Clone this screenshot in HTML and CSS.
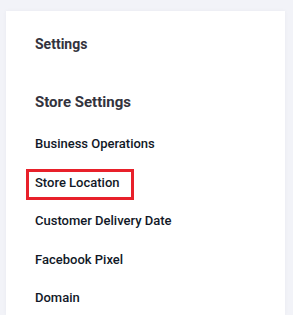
FILE: index.html
```html
<!DOCTYPE html>
<html lang="en">
<head>
    <meta charset="UTF-8">
    <meta name="viewport" content="width=device-width, initial-scale=1.0">
    <title>Settings</title>
    <link rel="stylesheet" href="styles.css">
</head>
<body>
    <aside class="panel">
        <h2 class="panel-title">Settings</h2>
        <h3 class="group-title">Store Settings</h3>
        <nav class="menu">
            <a class="menu-item" href="#">Business Operations</a>
            <a class="menu-item" href="#"><span class="highlight">Store Location</span></a>
            <a class="menu-item" href="#">Customer Delivery Date</a>
            <a class="menu-item" href="#">Facebook Pixel</a>
            <a class="menu-item" href="#">Domain</a>
        </nav>
    </aside>
</body>
</html>
```

FILE: styles.css
```css
body {
    font-family: Roboto, 'Noto Sans', sans-serif;
    margin: 0;
    padding: 11px 8px 0 6px;
    background-color: #f2f3f8;
    color: #1b1f2e;
    overflow: hidden;
}

.panel {
    background-color: #fff;
    height: 304px;
    padding: 0 0 0 29px;
    box-shadow: 0 0 4px rgba(30, 40, 80, 0.04);
}

.panel-title {
    margin: 0;
    padding-top: 23px;
    font-size: 14px;
    font-weight: 700;
    line-height: 20px;
    color: #33333d;
}

.group-title {
    margin: 0;
    padding-top: 38px;
    font-size: 15px;
    font-weight: 700;
    line-height: 20px;
    color: #33333d;
}

.menu {
    display: flex;
    flex-direction: column;
    margin-top: 24px;
}

.menu-item {
    display: flex;
    align-items: flex-start;
    height: 38.5px;
    font-size: 13px;
    font-weight: 500;
    line-height: 16px;
    color: #111827;
    text-decoration: none;
}

.highlight {
    display: block;
    margin: -6px 0 0 -9px;
    padding: 3px 11px 6px 6px;
    border: 3px solid #e8202a;
}
```
